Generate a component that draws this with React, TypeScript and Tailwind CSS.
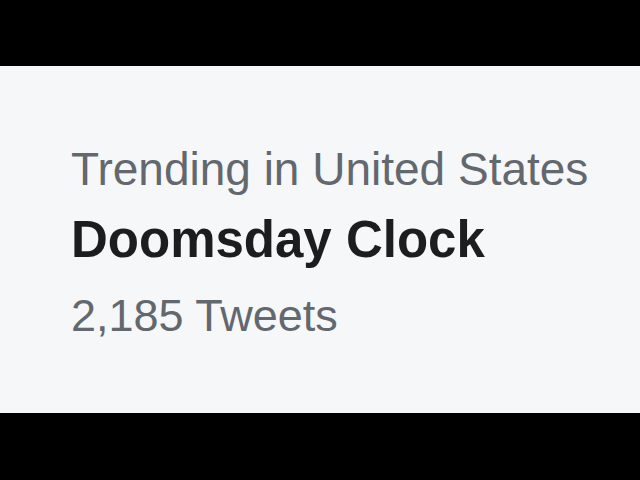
import React from 'react';

const App: React.FC = () => {
  return (
    <div className="w-[640px] h-[480px] bg-black flex flex-col" style={{ fontFamily: '"Liberation Sans", Arial, sans-serif' }}>
      <div className="h-[66px] shrink-0 bg-black" />
      <div className="h-[347px] shrink-0 bg-[#f6f7f8] pl-[71px] pt-[68px]">
        <p className="text-[46px] leading-[70px] text-[#63686e]">Trending in United States</p>
        <p className="text-[51px] leading-[72px] font-bold text-[#1b1d1f]">Doomsday Clock</p>
        <p className="mt-[4px] text-[45px] leading-[72px] text-[#63686e]">2,185 Tweets</p>
      </div>
      <div className="flex-1 bg-black" />
    </div>
  );
};

export default App;
